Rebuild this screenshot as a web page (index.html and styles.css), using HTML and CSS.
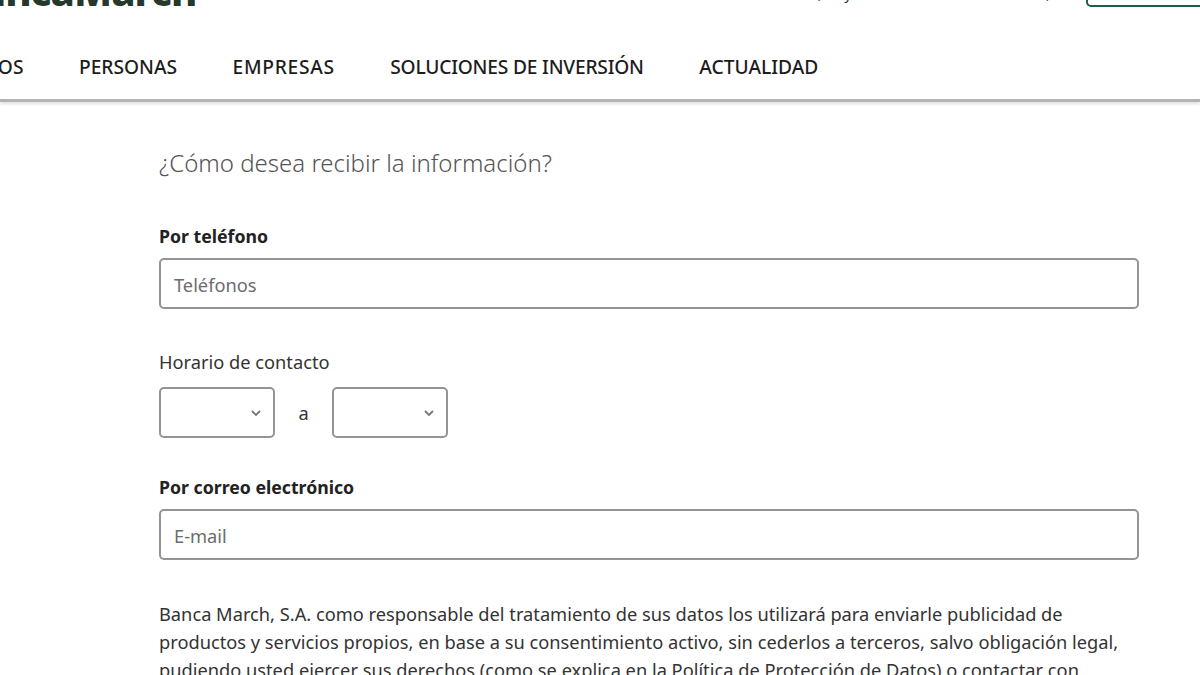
FILE: index.html
```html
<!DOCTYPE html>
<html lang="es">
<head>
<meta charset="utf-8">
<title>Banca March</title>
<link rel="stylesheet" href="styles.css">
</head>
<body>
<header class="site-header">
  <div class="top-bar">
    <div class="logo">BancaMarch</div>
    <div class="top-right">
      <span class="top-links">Acceso, tu ya eres cliente de esta banca,</span>
      <span class="top-button"></span>
    </div>
  </div>
  <nav class="main-nav">
    <a>NOSOTROS</a>
    <a>PERSONAS</a>
    <a class="nav-wide">EMPRESAS</a>
    <a class="nav-tight">SOLUCIONES DE INVERSIÓN</a>
    <a>ACTUALIDAD</a>
  </nav>
</header>
<main class="content">
  <h2 class="title">¿Cómo desea recibir la información?</h2>
  <label class="label-strong label-phone">Por teléfono</label>
  <div class="input">Teléfonos</div>
  <label class="label-plain">Horario de contacto</label>
  <div class="time-row">
    <div class="select"><svg class="chevron" viewBox="0 0 10 6" width="10" height="6"><path d="M1 1l4 4 4-4"/></svg></div>
    <span class="sep">a</span>
    <div class="select"><svg class="chevron" viewBox="0 0 10 6" width="10" height="6"><path d="M1 1l4 4 4-4"/></svg></div>
  </div>
  <label class="label-strong label-mail">Por correo electrónico</label>
  <div class="input">E-mail</div>
  <p class="legal">Banca March, S.A. como responsable del tratamiento de sus datos los utilizará para enviarle publicidad de<br>productos y servicios propios, en base a su consentimiento activo, sin cederlos a terceros, salvo obligación legal,<br>pudiendo usted ejercer sus derechos (como se explica en la Política de Protección de Datos) o contactar con</p>
</main>
</body>
</html>
```
FILE: styles.css
```css
* { box-sizing: border-box; }
html, body { margin: 0; height: 675px; overflow: hidden; background: #fff; }
body { font-family: "Noto Sans", sans-serif; color: #2b2b2b; font-size: 18.25px; }
.site-header { height: 102px; border-bottom: 3px solid #b4b4b4; box-shadow: 0 2px 3px rgba(0,0,0,.12); overflow: hidden; }
.top-bar { height: 32px; margin-top: -25px; display: flex; justify-content: space-between; align-items: flex-end; }
.logo { margin-left: -44px; font-size: 40px; line-height: 32px; font-weight: 800; letter-spacing: -1px; color: #24392b; }
.top-right { display: flex; align-items: flex-end; gap: 36px; }
.top-links { font-size: 15px; line-height: 30px; margin-bottom: -1px; color: #333; }
.top-button { width: 131px; height: 30px; margin-right: -17px; border: 2px solid #1f5c50; border-radius: 5px; }
.main-nav { display: flex; gap: 55.5px; margin: 46px 0 0 -80px; white-space: nowrap; }
.main-nav a { font-size: 19.2px; line-height: 28px; font-weight: 500; color: #1c1c1c; }
.main-nav .nav-wide { letter-spacing: .7px; }
.main-nav .nav-tight { letter-spacing: -.2px; }
.content { padding: 0 61px 0 159px; display: flex; flex-direction: column; align-items: stretch; }
.title { margin: 45px 0 0; font-size: 24px; line-height: 32px; font-weight: 300; color: #555; }
label { display: block; line-height: 24px; }
.label-strong { font-size: 17.7px; font-weight: 700; color: #222; }
.label-phone { margin-top: 45px; }
.label-plain { margin-top: 41px; color: #333; }
.label-mail { margin-top: 37px; }
.input { height: 51px; margin-top: 10px; padding: 1px 0 0 13px; display: flex; align-items: center; border: 2px solid #949494; border-radius: 5px; color: #6c6c6c; }
.time-row { margin-top: 13px; display: flex; align-items: center; gap: 23.5px; }
.select { width: 116px; height: 51px; border: 2px solid #949494; border-radius: 5px; display: flex; align-items: center; justify-content: flex-end; padding-right: 12px; }
.chevron { fill: none; stroke: #777; stroke-width: 1.8; }
.sep { color: #333; }
.legal { margin: 40px 0 0; line-height: 28px; color: #333; white-space: nowrap; }
```
